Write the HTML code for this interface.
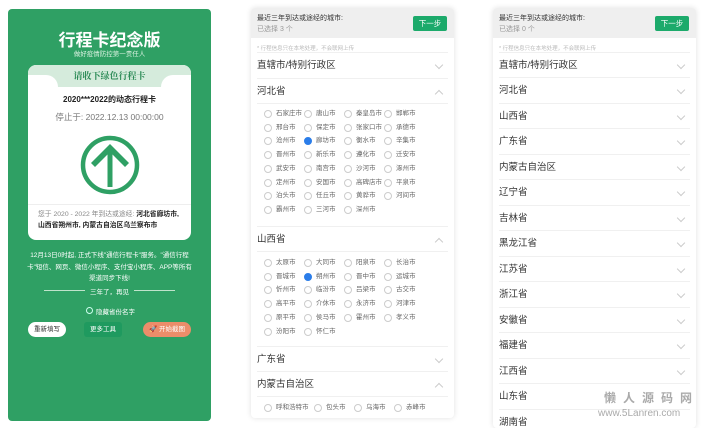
<!DOCTYPE html>
<html><head><meta charset="utf-8"><style>
*{margin:0;padding:0;box-sizing:border-box}
body{width:703px;height:427px;background:#fff;position:relative;overflow:hidden;font-family:"Liberation Sans","Noto Sans CJK SC",sans-serif}
.a{position:absolute}
.g{left:8px;top:9px;width:203px;height:412px;background:#2fa064;border-radius:4px}
.c{text-align:center;white-space:nowrap}
.p{top:8px;width:203px;background:#fff;box-shadow:0 0 6px rgba(0,0,0,.12);border-radius:4px;overflow:hidden}
.hd{position:absolute;left:0;top:0;width:100%;height:30px;background:#efefef}
.hd .t1{position:absolute;left:6px;top:5px;font-size:7px;color:#333}
.hd .t2{position:absolute;left:6px;top:16px;font-size:7px;color:#999}
.btn{position:absolute;right:7px;top:8px;width:34px;height:15px;background:#1caa6b;border-radius:2px;color:#fff;font-size:7.5px;text-align:center;line-height:15px}
.note{position:absolute;left:6px;top:36px;font-size:5.5px;color:#bbb}
.row{position:absolute;left:6px;width:191px;height:25.5px;border-top:1px solid #f0f0f0;font-size:9.5px;color:#333;line-height:25px}
.row i{position:absolute;right:6px;top:9px;width:6px;height:6px;border-right:1px solid #ccc;border-bottom:1px solid #ccc;transform:rotate(45deg)}
.row i.u{top:12px;transform:rotate(225deg)}
.ct{position:absolute;left:13px;font-size:6.5px;color:#666;white-space:nowrap;height:12px;line-height:12px;display:flex}
.ct span{display:block;width:40px;position:relative;padding-left:12px;white-space:nowrap}
.ct span:before{content:"";position:absolute;left:0;top:2px;width:8px;height:8px;border:1px solid #ccc;border-radius:50%;box-sizing:border-box}
.ct span.k:before{background:#2b7de9;border-color:#2b7de9}
</style></head><body>
<div class="a g"></div>
<div class="a c" style="left:8px;width:203px;top:26px;font-size:17px;font-weight:bold;color:#fff">行程卡纪念版</div>
<div class="a c" style="left:8px;width:203px;top:48px;font-size:6.5px;color:#d8f0df">做好疫情防控第一责任人</div>
<div class="a" style="left:28px;top:65px;width:163px;height:175px;background:#fff;border-radius:8px"></div>
<div class="a" style="left:28px;top:65px;width:163px;height:22px;background:#d5ebdc;border-radius:8px 8px 0 0"></div>
<div class="a" style="left:28px;top:75px;width:30px;height:14px;background:#fff;border-top-right-radius:12px"></div>
<div class="a" style="left:161px;top:75px;width:30px;height:14px;background:#fff;border-top-left-radius:12px"></div>
<div class="a c" style="left:28px;width:163px;top:69px;font-size:9px;color:#2a8a55;font-family:'Noto Serif CJK SC',serif;font-weight:bold">请收下绿色行程卡</div>
<div class="a c" style="left:28px;width:163px;top:94px;font-size:8px;color:#222;font-weight:bold">2020***2022的动态行程卡</div>
<div class="a c" style="left:28px;width:163px;top:111px;font-size:8.5px;color:#777">停止于: 2022.12.13 00:00:00</div>
<svg class="a" style="left:79px;top:134px" width="62" height="62" viewBox="0 0 62 62"><circle cx="31" cy="31" r="27" fill="none" stroke="#2fa064" stroke-width="4.5"/><path d="M31 53V14" stroke="#2fa064" stroke-width="5" fill="none"/><path d="M31 10L12 29 16 33 31 18 46 33 50 29Z" fill="#2fa064"/></svg>
<div class="a" style="left:28px;top:204px;width:163px;border-top:1px solid #eee"></div>
<div class="a" style="left:38px;top:209px;width:152px;font-size:6.8px;line-height:11px;color:#888"><span>您于 2020 - 2022 年到达或途经: </span><b style="color:#222">河北省廊坊市,<br>山西省朔州市, 内蒙古自治区乌兰察布市</b></div>
<div class="a c" style="left:26px;width:167px;top:250px;font-size:6.5px;line-height:11.5px;color:#fff;white-space:normal">12月13日0时起, 正式下线"通信行程卡"服务。"通信行程卡"短信、网页、微信小程序、支付宝小程序、APP等所有渠道同步下线!</div>
<div class="a" style="left:44px;top:290px;width:41px;border-top:1px solid #bfe3cb"></div>
<div class="a" style="left:134px;top:290px;width:41px;border-top:1px solid #bfe3cb"></div>
<div class="a c" style="left:85px;width:49px;top:286px;font-size:6.5px;color:#fff">三年了，再见</div>
<div class="a" style="left:86px;top:307px;width:7px;height:7px;border:1px solid #cfe;border-radius:50%"></div>
<div class="a" style="left:96px;top:306px;font-size:6.5px;color:#fff">隐藏省份名字</div>
<div class="a c" style="left:28px;top:322px;width:38px;height:15px;background:#fff;border-radius:8px;font-size:6.5px;line-height:15px;color:#333">重新填写</div>
<div class="a c" style="left:84px;top:322px;width:38px;height:15px;background:#1f9a5f;border-radius:3px;font-size:6.5px;line-height:15px;color:#fff">更多工具</div>
<div class="a c" style="left:143px;top:322px;width:48px;height:15px;background:#ec8d6a;border-radius:8px;font-size:6.5px;line-height:15px;color:#fff">🚀 开始截图</div>

<!-- panel 2 -->
<div class="a p" style="left:251px;height:410px">
<div class="hd"><div class="t1">最近三年到达或途经的城市:</div><div class="t2">已选择 3 个</div><div class="btn">下一步</div></div>
<div class="note">* 行程信息只在本地处理，不会联网上传</div>
<div class="row" style="top:44px">直辖市/特别行政区<i></i></div>
<div class="row" style="top:69.5px">河北省<i class="u"></i></div>
<div class="row" style="top:95px;height:122px"></div>
<div class="ct" style="top:100px"><span>石家庄市</span><span>唐山市</span><span>秦皇岛市</span><span>邯郸市</span></div>
<div class="ct" style="top:113.7px"><span>邢台市</span><span>保定市</span><span>张家口市</span><span>承德市</span></div>
<div class="ct" style="top:127.4px"><span>沧州市</span><span class="k">廊坊市</span><span>衡水市</span><span>辛集市</span></div>
<div class="ct" style="top:141.1px"><span>晋州市</span><span>新乐市</span><span>遵化市</span><span>迁安市</span></div>
<div class="ct" style="top:154.8px"><span>武安市</span><span>南宫市</span><span>沙河市</span><span>涿州市</span></div>
<div class="ct" style="top:168.5px"><span>定州市</span><span>安国市</span><span>高碑店市</span><span>平泉市</span></div>
<div class="ct" style="top:182.2px"><span>泊头市</span><span>任丘市</span><span>黄骅市</span><span>河间市</span></div>
<div class="ct" style="top:195.9px"><span>霸州市</span><span>三河市</span><span>深州市</span></div>
<div class="row" style="top:217.5px">山西省<i class="u"></i></div>
<div class="row" style="top:243px;height:94px"></div>
<div class="ct" style="top:249px"><span>太原市</span><span>大同市</span><span>阳泉市</span><span>长治市</span></div>
<div class="ct" style="top:262.7px"><span>晋城市</span><span class="k">朔州市</span><span>晋中市</span><span>运城市</span></div>
<div class="ct" style="top:276.4px"><span>忻州市</span><span>临汾市</span><span>吕梁市</span><span>古交市</span></div>
<div class="ct" style="top:290.1px"><span>高平市</span><span>介休市</span><span>永济市</span><span>河津市</span></div>
<div class="ct" style="top:303.8px"><span>原平市</span><span>侯马市</span><span>霍州市</span><span>孝义市</span></div>
<div class="ct" style="top:317.5px"><span>汾阳市</span><span>怀仁市</span></div>
<div class="row" style="top:337.5px">广东省<i></i></div>
<div class="row" style="top:362.5px">内蒙古自治区<i class="u"></i></div>
<div class="row" style="top:388px"></div>
<div class="ct" style="top:394px"><span style="width:50px">呼和浩特市</span><span>包头市</span><span>乌海市</span><span>赤峰市</span></div>
</div>

<!-- panel 3 -->
<div class="a p" style="left:493px;height:420px">
<div class="hd"><div class="t1">最近三年到达或途经的城市:</div><div class="t2">已选择 0 个</div><div class="btn">下一步</div></div>
<div class="note">* 行程信息只在本地处理，不会联网上传</div>
<div class="row" style="top:43.5px">直辖市/特别行政区<i></i></div>
<div class="row" style="top:69px">河北省<i></i></div>
<div class="row" style="top:94.5px">山西省<i></i></div>
<div class="row" style="top:120px">广东省<i></i></div>
<div class="row" style="top:145.5px">内蒙古自治区<i></i></div>
<div class="row" style="top:171px">辽宁省<i></i></div>
<div class="row" style="top:196.5px">吉林省<i></i></div>
<div class="row" style="top:222px">黑龙江省<i></i></div>
<div class="row" style="top:247.5px">江苏省<i></i></div>
<div class="row" style="top:273px">浙江省<i></i></div>
<div class="row" style="top:298.5px">安徽省<i></i></div>
<div class="row" style="top:324px">福建省<i></i></div>
<div class="row" style="top:349.5px">江西省<i></i></div>
<div class="row" style="top:375px">山东省</div>
<div class="row" style="top:400.5px">湖南省</div>
</div>
<div class="a" style="left:604px;top:389px;font-size:12px;letter-spacing:7px;color:#aaa;font-weight:bold">懒人源码网</div>
<div class="a" style="left:598px;top:408px;font-size:10px;color:#aaa">www.5Lanren.com</div>
</body></html>
